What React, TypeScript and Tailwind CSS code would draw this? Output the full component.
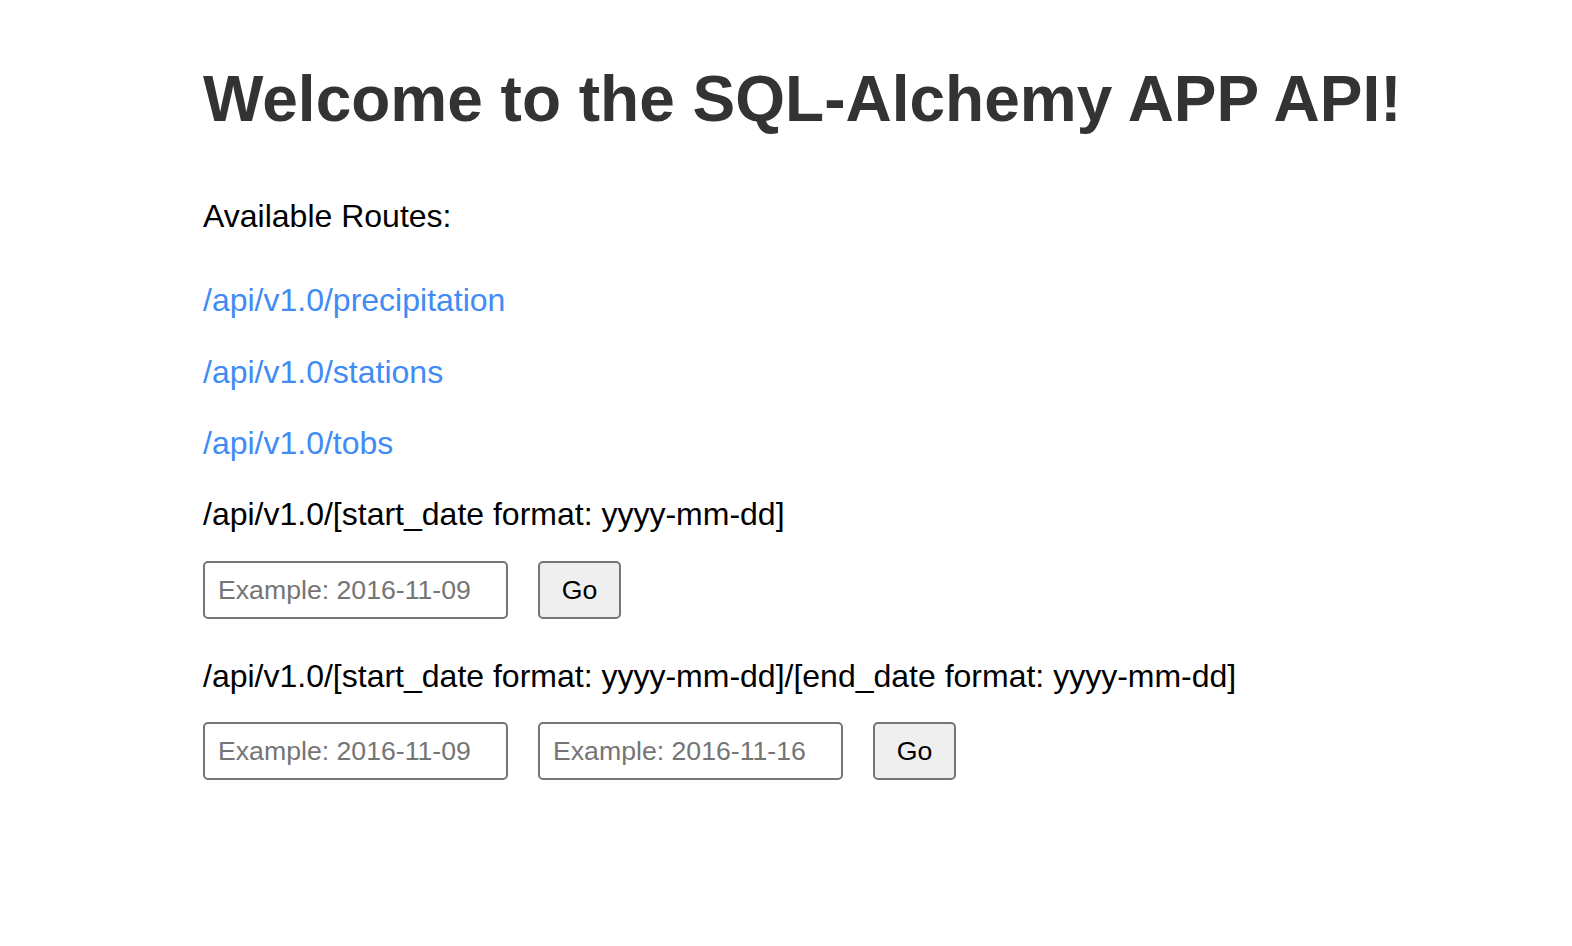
import React from "react";

const routes = ["/api/v1.0/precipitation", "/api/v1.0/stations", "/api/v1.0/tobs"];

export default function App() {
  return (
    <div
      className="min-h-screen bg-white pl-[203px] pt-[62px] text-black"
      style={{ fontFamily: '"Liberation Sans", Arial, Helvetica, sans-serif' }}
    >
      <h1 className="text-[64px] leading-[74px] font-bold text-[#333333]">
        Welcome to the SQL-Alchemy APP API!
      </h1>

      <p className="mt-[62px] text-[32px] leading-[37px]">Available Routes:</p>

      <div className="mt-[47px] flex flex-col gap-[34.5px]">
        {routes.map((r) => (
          <a
            key={r}
            href="#"
            className="text-[32px] leading-[37px] text-[#418bf5] w-fit"
          >
            {r}
          </a>
        ))}
      </div>

      <p className="mt-[34px] text-[32px] leading-[37px]">
        /api/v1.0/[start_date format: yyyy-mm-dd]
      </p>
      <div className="mt-[28px] flex gap-[30px]">
        <DateInput placeholder="Example: 2016-11-09" />
        <GoButton />
      </div>

      <p className="mt-[39px] text-[32px] leading-[37px]">
        /api/v1.0/[start_date format: yyyy-mm-dd]/[end_date format: yyyy-mm-dd]
      </p>
      <div className="mt-[27px] flex gap-[30px]">
        <DateInput placeholder="Example: 2016-11-09" />
        <DateInput placeholder="Example: 2016-11-16" />
        <GoButton />
      </div>
    </div>
  );
}

function DateInput({ placeholder }: { placeholder: string }) {
  return (
    <input
      type="text"
      placeholder={placeholder}
      className="w-[305px] h-[58px] border-2 border-[#767676] rounded-[5px] px-[13px] text-[26.67px] text-black placeholder:text-[#757575] bg-white outline-none"
    />
  );
}

function GoButton() {
  return (
    <button
      type="button"
      className="w-[83px] h-[58px] border-2 border-[#767676] rounded-[5px] bg-[#efefef] text-[26.67px] text-black"
    >
      Go
    </button>
  );
}
